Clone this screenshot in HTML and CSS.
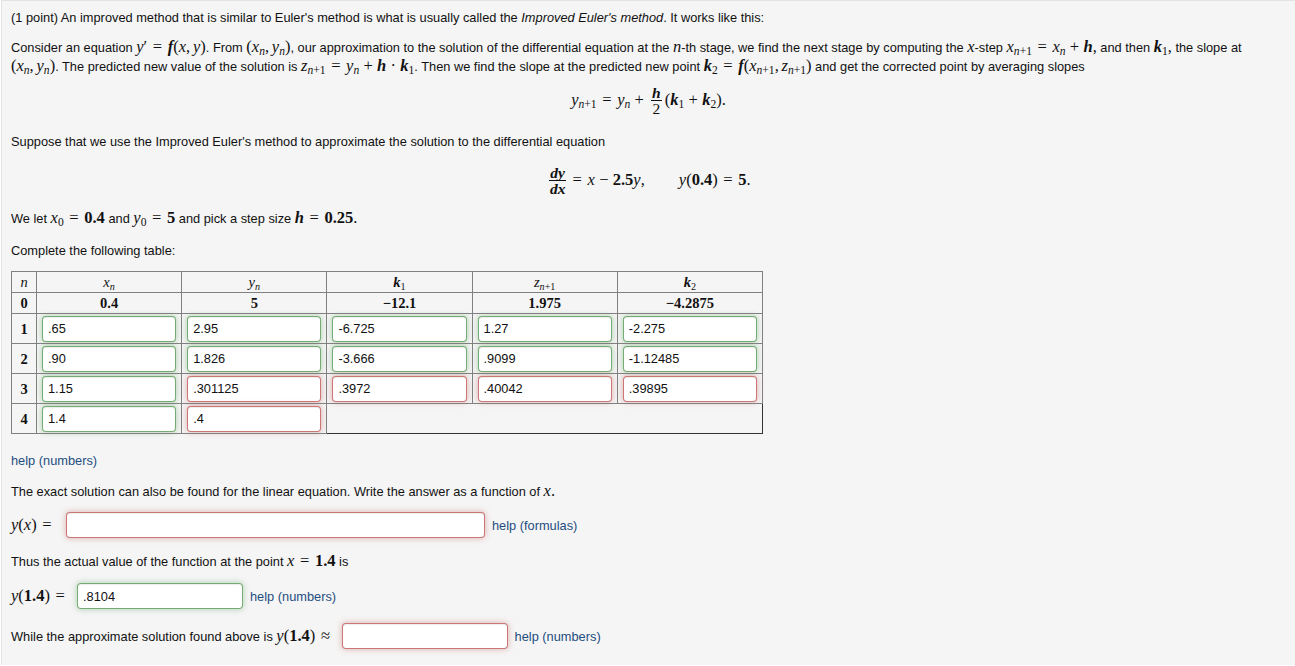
FILE: index.html
```html
<!DOCTYPE html>
<html>
<head>
<meta charset="utf-8">
<link rel="stylesheet" href="styles.css">
</head>
<body>
<div class="problem">
  <p class="p1">(1 point) An improved method that is similar to Euler's method is what is usually called the <em>Improved Euler's method</em>. It works like this:</p>
  <p class="p2">Consider an equation <span class="m"><i>y</i>′<span class="r">=</span><b><i>f</i></b>(<i>x</i>,<span class="c"></span><i>y</i>)</span>. From <span class="m">(<i>x</i><sub><i>n</i></sub>,<span class="c"></span><i>y</i><sub><i>n</i></sub>)</span>, our approximation to the solution of the differential equation at the <span class="m"><i>n</i></span>-th stage, we find the next stage by computing the <span class="m"><i>x</i></span>-step <span class="m"><i>x</i><sub><i>n</i>+1</sub><span class="r">=</span><i>x</i><sub><i>n</i></sub><span class="o">+</span><b><i>h</i></b>,</span> and then <span class="m"><b><i>k</i></b><sub>1</sub>,</span> the slope at <span class="m">(<i>x</i><sub><i>n</i></sub>,<span class="c"></span><i>y</i><sub><i>n</i></sub>)</span>. The predicted new value of the solution is <span class="m"><i>z</i><sub><i>n</i>+1</sub><span class="r">=</span><i>y</i><sub><i>n</i></sub><span class="o">+</span><b><i>h</i></b><span class="o">·</span><b><i>k</i></b><sub>1</sub></span>. Then we find the slope at the predicted new point <span class="m"><b><i>k</i></b><sub>2</sub><span class="r">=</span><b><i>f</i></b>(<i>x</i><sub><i>n</i>+1</sub>,<span class="c"></span><i>z</i><sub><i>n</i>+1</sub>)</span> and get the corrected point by averaging slopes</p>
  <div class="disp d1"><span class="m"><i>y</i><sub><i>n</i>+1</sub><span class="r">=</span><i>y</i><sub><i>n</i></sub><span class="o">+</span></span><span class="frac m"><span class="num"><b><i>h</i></b></span><span class="den">2</span></span><span class="m">(<b><i>k</i></b><sub>1</sub><span class="o">+</span><b><i>k</i></b><sub>2</sub>).</span></div>
  <p class="p3">Suppose that we use the Improved Euler's method to approximate the solution to the differential equation</p>
  <div class="disp d2"><span class="frac m"><span class="num"><b><i>dy</i></b></span><span class="den"><b><i>dx</i></b></span></span><span class="m"><span class="r">=</span><i>x</i><span class="o">−</span><b>2.5</b><i>y</i>,</span><span class="quad"></span><span class="m"><i>y</i>(<b>0.4</b>)<span class="r">=</span><b>5</b>.</span></div>
  <p class="p4">We let <span class="m"><i>x</i><sub>0</sub><span class="r">=</span><b>0.4</b></span> and <span class="m"><i>y</i><sub>0</sub><span class="r">=</span><b>5</b></span> and pick a step size <span class="m"><b><i>h</i></b><span class="r">=</span><b>0.25</b>.</span></p>
  <p class="p5">Complete the following table:</p>
  <table class="tbl">
    <colgroup><col class="c0"><col class="c1"><col class="c1"><col class="c1"><col class="c1"><col class="c1"></colgroup>
    <tr class="hr h0"><th><i>n</i></th><th><i>x</i><sub><i>n</i></sub></th><th><i>y</i><sub><i>n</i></sub></th><th><b><i>k</i></b><sub>1</sub></th><th><i>z</i><sub><i>n</i>+1</sub></th><th><b><i>k</i></b><sub>2</sub></th></tr>
    <tr class="hr"><th>0</th><th>0.4</th><th>5</th><th>−12.1</th><th>1.975</th><th>−4.2875</th></tr>
    <tr><th>1</th><td><input class="ok" value=".65"></td><td><input class="ok" value="2.95"></td><td><input class="ok" value="-6.725"></td><td><input class="ok" value="1.27"></td><td><input class="ok" value="-2.275"></td></tr>
    <tr><th>2</th><td><input class="ok" value=".90"></td><td><input class="ok" value="1.826"></td><td><input class="ok" value="-3.666"></td><td><input class="ok" value=".9099"></td><td><input class="ok" value="-1.12485"></td></tr>
    <tr><th>3</th><td><input class="ok" value="1.15"></td><td><input class="bad" value=".301125"></td><td><input class="bad" value=".3972"></td><td><input class="bad" value=".40042"></td><td><input class="bad" value=".39895"></td></tr>
    <tr><th>4</th><td><input class="ok" value="1.4"></td><td><input class="bad" value=".4"></td><td class="empty" colspan="3"></td></tr>
  </table>
  <p class="p6"><a class="help">help (numbers)</a></p>
  <p class="p7">The exact solution can also be found for the linear equation. Write the answer as a function of <span class="m"><i>x</i>.</span></p>
  <div class="row r1"><span class="m lbl"><i>y</i>(<i>x</i>)<span class="r">=</span></span><input class="bad wide" value=""><a class="help">help (formulas)</a></div>
  <p class="p8">Thus the actual value of the function at the point <span class="m"><i>x</i><span class="r">=</span><b>1.4</b></span> is</p>
  <div class="row r2"><span class="m lbl"><i>y</i>(<b>1.4</b>)<span class="r">=</span></span><input class="ok mid" value=".8104"><a class="help">help (numbers)</a></div>
  <div class="row r3"><span class="lbl">While the approximate solution found above is <span class="m"><i>y</i>(<b>1.4</b>)<span class="r">≈</span></span></span><input class="bad mid" value=""><a class="help">help (numbers)</a></div>
</div>
</body>
</html>
```
FILE: styles.css
```css
html, body {
  margin: 0;
  padding: 0;
  background: #ffffff;
}
body {
  font-family: "Liberation Sans", Arial, sans-serif;
  font-size: 12.8px;
  color: #111;
}
.problem {
  margin-left: 1px;
  border-left: 1px solid #e3e3e3;
  border-top: 1px solid #e3e3e3;
  background: #f5f5f5;
  padding: 7px 9px 0 9px;
  height: 665px;
  box-sizing: border-box;
}
p {
  margin: 0;
  line-height: 19px;
}
.m {
  font-family: "Liberation Serif", "DejaVu Serif", serif;
  font-size: 16.5px;
  white-space: nowrap;
  line-height: 1;
}
.m b, .tbl b { font-weight: bold; }
.r { margin: 0 0.34em; }
.o { margin: 0 0.26em; }
.c { display: inline-block; width: 0.17em; }
sub {
  font-size: 0.7em;
  vertical-align: -0.3em;
  line-height: 0;
}
.p2 { margin-top: 11px; }
.disp {
  display: flex;
  justify-content: center;
  align-items: center;
  height: 32px;
}
.d1 { margin-top: 8px; }
.frac {
  display: inline-flex;
  flex-direction: column;
  align-items: center;
  margin: 0 3px;
  font-size: 15.5px;
  line-height: 15px;
}
.frac .num {
  border-bottom: 1px solid #111;
  padding: 0 1px;
}
.d2 .frac { margin-right: 1px; }
.quad { width: 34px; }
.p3 { margin-top: 16px; }
.d2 { margin-top: 13px; }
.p4 { margin-top: 13px; }
.p5 { margin-top: 13px; }
.tbl {
  margin-top: 11px;
  border-collapse: collapse;
  table-layout: fixed;
  width: 752px;
}
.c0 { width: 25px; }
.tbl th, .tbl td {
  border: 1px solid #808080;
  padding: 0;
  text-align: center;
  font-family: "Liberation Serif", "DejaVu Serif", serif;
  font-size: 14.5px;
  line-height: 16px;
}
.tbl .hr th { height: 20px; font-weight: bold; }
.tbl .h0 th { font-weight: normal; }
.tbl th { font-weight: bold; }
.tbl td {
  height: 29px;
  padding: 0 5px;
}
.tbl td.empty {
  border: 1px solid #333;
}
input {
  display: block;
  box-sizing: border-box;
  width: 100%;
  height: 26px;
  margin: 0;
  padding: 0 5px;
  border: 1px solid;
  border-radius: 4px;
  background: #fff;
  font-family: "Liberation Sans", Arial, sans-serif;
  font-size: 12.8px;
  color: #111;
  outline: none;
}
input.ok {
  border-color: rgba(81, 153, 81, 0.8);
  box-shadow: inset 0 1px 1px rgba(0,0,0,.075), 0 0 6px rgba(81, 153, 81, 0.45);
}
input.bad {
  border-color: rgba(191, 84, 84, 0.8);
  box-shadow: inset 0 1px 1px rgba(0,0,0,.075), 0 0 6px rgba(191, 84, 84, 0.45);
}
.help {
  color: #1d4d80;
  text-decoration: none;
}
.p6 { margin-top: 17px; }
.p7 { margin-top: 12px; }
.row {
  display: flex;
  align-items: center;
  height: 26px;
}
.row input { display: inline-block; }
.row .help { margin-left: 7px; }
.r1 { margin-top: 11px; }
.r1 .lbl { width: 55px; }
.wide { width: 419px; }
.p8 { margin-top: 14px; }
.r2 { margin-top: 12px; }
.r2 .lbl { width: 66px; }
.mid { width: 166px; }
.r3 { margin-top: 14px; }
.r3 .lbl { margin-right: 6px; }
```
